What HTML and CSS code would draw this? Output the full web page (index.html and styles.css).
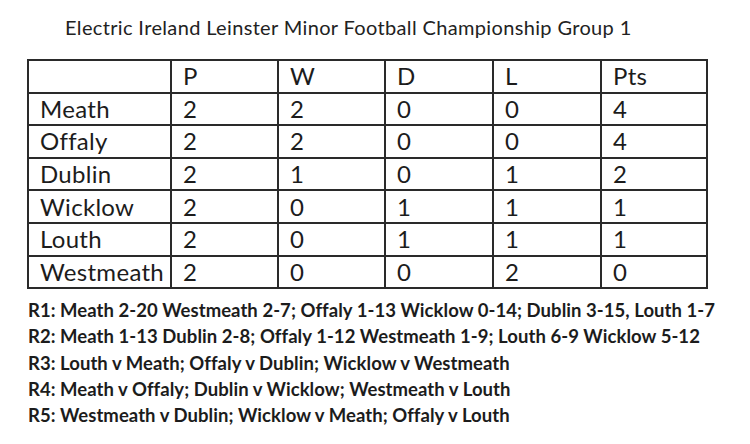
FILE: index.html
```html
<!DOCTYPE html>
<html>
<head>
<meta charset="utf-8">
<link rel="stylesheet" href="styles.css">
</head>
<body>
<div class="page">
  <h1 class="title">Electric Ireland Leinster Minor Football Championship Group 1</h1>
  <table class="standings">
    <colgroup>
      <col class="c-team"><col class="c-p"><col class="c-w"><col class="c-d"><col class="c-l"><col class="c-pts">
    </colgroup>
    <tr><td></td><td>P</td><td>W</td><td>D</td><td>L</td><td>Pts</td></tr>
    <tr><td>Meath</td><td>2</td><td>2</td><td>0</td><td>0</td><td>4</td></tr>
    <tr><td>Offaly</td><td>2</td><td>2</td><td>0</td><td>0</td><td>4</td></tr>
    <tr><td>Dublin</td><td>2</td><td>1</td><td>0</td><td>1</td><td>2</td></tr>
    <tr><td>Wicklow</td><td>2</td><td>0</td><td>1</td><td>1</td><td>1</td></tr>
    <tr><td>Louth</td><td>2</td><td>0</td><td>1</td><td>1</td><td>1</td></tr>
    <tr><td>Westmeath</td><td>2</td><td>0</td><td>0</td><td>2</td><td>0</td></tr>
  </table>
  <div class="results">
    <p>R1: Meath 2-20 Westmeath 2-7; Offaly 1-13 Wicklow 0-14; Dublin 3-15, Louth 1-7</p>
    <p>R2: Meath 1-13 Dublin 2-8; Offaly 1-12 Westmeath 1-9; Louth 6-9 Wicklow 5-12</p>
    <p>R3: Louth v Meath; Offaly v Dublin; Wicklow v Westmeath</p>
    <p>R4: Meath v Offaly; Dublin v Wicklow; Westmeath v Louth</p>
    <p>R5: Westmeath v Dublin; Wicklow v Meath; Offaly v Louth</p>
  </div>
</div>
</body>
</html>
```

FILE: styles.css
```css
html, body {
  margin: 0;
  padding: 0;
  background: #ffffff;
}
.page {
  font-family: Lato, "Liberation Sans", sans-serif;
  color: #1c1c1c;
  padding: 13px 0 0 0;
}
.title {
  margin: 0 0 0 65px;
  font-size: 20px;
  letter-spacing: 0.35px;
  font-weight: normal;
  line-height: 28px;
  height: 46px;
  color: #222;
  white-space: nowrap;
}
.standings {
  margin-left: 27px;
  border-collapse: collapse;
  table-layout: fixed;
  width: 681px;
  font-size: 24px;
  letter-spacing: 0.3px;
}
.c-team { width: 143px; }
.c-p { width: 107px; }
.c-w { width: 107px; }
.c-d { width: 108px; }
.c-l { width: 108px; }
.c-pts { width: 106px; }
.standings td {
  border: 2px solid #2a2a2a;
  height: 30.6px;
  padding: 0 0 0 11px;
  line-height: 28px;
  vertical-align: middle;
}
.results {
  margin: 8px 0 0 28px;
  font-weight: bold;
  font-size: 18.5px;
  letter-spacing: 0.05px;
  line-height: 26.3px;
  white-space: nowrap;
}
.results p {
  margin: 0;
}
```
